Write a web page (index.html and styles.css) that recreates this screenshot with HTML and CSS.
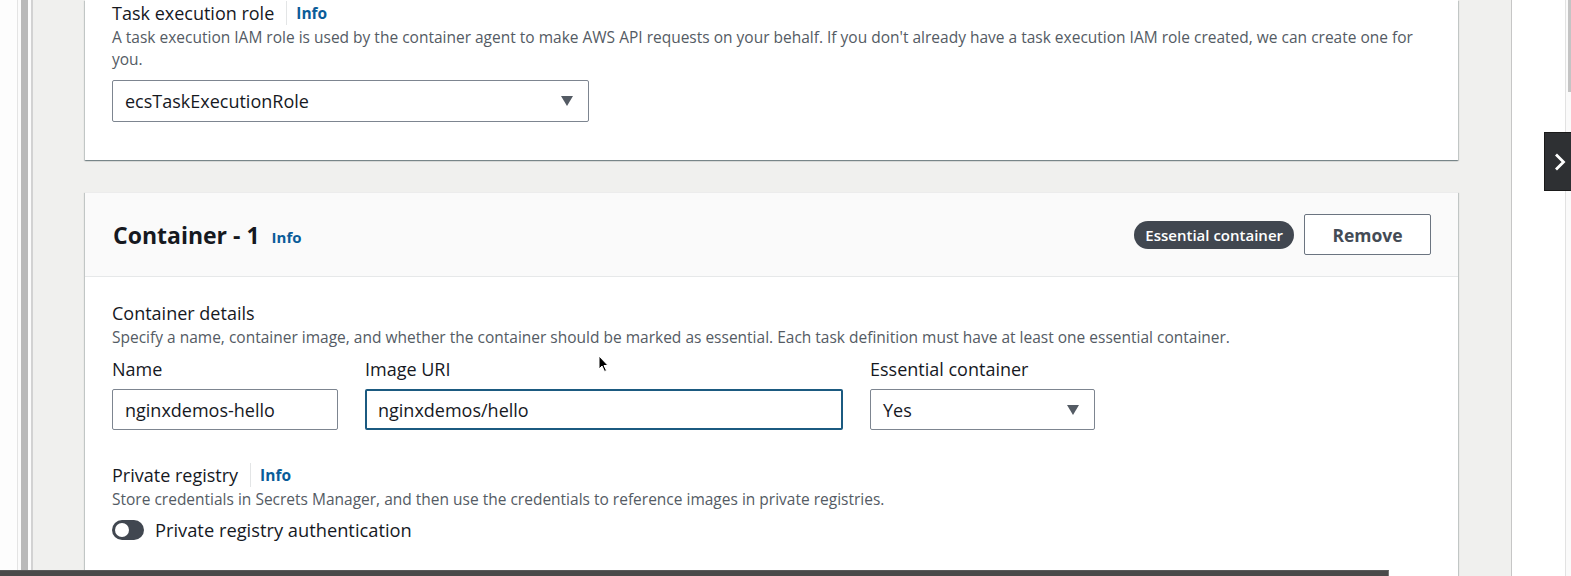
FILE: index.html
```html
<!DOCTYPE html>
<html>
<head>
<meta charset="utf-8">
<link rel="stylesheet" href="styles.css">
</head>
<body>
<div class="app">
  <div class="rail">
    <span class="r-white"></span><span class="r-line"></span><span class="r-gap"></span><span class="r-bar"></span><span class="r-gap"></span><span class="r-edge"></span>
  </div>
  <main class="content">
    <section class="card card-top">
      <div class="field-head"><span class="label">Task execution role</span><span class="divider"></span><a class="info">Info</a></div>
      <p class="desc d2">A task execution IAM role is used by the container agent to make AWS API requests on your behalf. If you don't already have a task execution IAM role created, we can create one for you.</p>
      <div class="select select-role"><span>ecsTaskExecutionRole</span><span class="caret"></span></div>
    </section>
    <section class="card card-container">
      <header class="card-header">
        <h2 class="title">Container - 1</h2><a class="info info-lg">Info</a>
        <div class="actions"><span class="badge">Essential container</span><button class="btn">Remove</button></div>
      </header>
      <div class="card-body">
        <div class="label lh24">Container details</div>
        <p class="desc d1">Specify a name, container image, and whether the container should be marked as essential. Each task definition must have at least one essential container.</p>
        <div class="fields">
          <div class="field f-name"><div class="label lh24">Name</div><div class="input">nginxdemos-hello</div></div>
          <div class="field f-uri"><div class="label lh24">Image URI</div><div class="input focus">nginxdemos/hello</div></div>
          <div class="field f-ess"><div class="label lh24">Essential container</div><div class="select"><span>Yes</span><span class="caret"></span></div></div>
        </div>
        <div class="field-head reg"><span class="label">Private registry</span><span class="divider"></span><a class="info">Info</a></div>
        <p class="desc d1">Store credentials in Secrets Manager, and then use the credentials to reference images in private registries.</p>
        <div class="toggle-row"><span class="toggle"><span class="knob"></span></span><span class="toggle-label">Private registry authentication</span></div>
      </div>
    </section>
  </main>
  <aside class="panel"></aside>
  <div class="scroll"><span class="thumb"></span></div>
</div>
<div class="tab"><svg width="12" height="20" viewBox="0 0 12 20"><path d="M2 2.5 L9.5 10 L2 17.5" fill="none" stroke="#fff" stroke-width="2.8"/></svg></div>
<div class="hbar"></div>
<svg class="cursor" width="12" height="18" viewBox="0 0 12 18"><path d="M1 1 L1 14 L4 11 L6.5 16.5 L8.5 15.5 L6 10.5 L10 10.5 Z" fill="#000" stroke="#fff" stroke-width="1"/></svg>
</body>
</html>
```
FILE: styles.css
```css
* { box-sizing: border-box; }
html, body { margin: 0; padding: 0; }
body {
  width: 1571px;
  height: 576px;
  overflow: hidden;
  font-family: "Open Sans", "Noto Sans", sans-serif;
  color: #16191f;
  background: #fff;
}
.app { display: flex; height: 576px; }
.rail { display: flex; width: 33px; flex: none; }
.rail span { display: block; height: 100%; }
.r-white { width: 17px; background: #fdfdfd; }
.r-line { width: 1px; background: #e4e4e4; }
.r-gap { width: 3px; background: #fbfbfb; }
.r-bar { width: 7px; background: #b9b9b9; }
.r-edge { width: 2px; background: #d2d2d2; }
.content {
  flex: 1;
  background: #f0f0ee;
  padding: 0 53px 0 52px;
  display: flex;
  flex-direction: column;
  gap: 32px;
}
.panel { width: 55px; flex: none; border-left: 1px solid #c6c6c6; border-right: 1px solid #e2e2e2; background: #fff; }
.scroll { width: 5px; flex: none; background: #fafafa; position: relative; }
.thumb { position: absolute; top: 0; right: 0; width: 3px; height: 92px; background: #c4c4c4; }
.card {
  background: #fff;
  box-shadow: 0 1px 1px 0 rgba(0,28,36,.3), 1px 1px 1px 0 rgba(0,28,36,.15), -1px 1px 1px 0 rgba(0,28,36,.15);
}
.card-top { padding: 1px 28px 38px 27px; flex: none; }
.field-head { display: flex; align-items: center; height: 24px; }
.label { font-size: 18px; line-height: 22px; color: #16191f; }
.lh24 { line-height: 24px; }
.divider { width: 1px; height: 24px; background: #e3e5e6; margin: 0 9px 0 12px; }
.info { font-size: 15.5px; font-weight: 700; color: #0a5c99; line-height: 22px; }
.desc { margin: 0; font-size: 15.5px; line-height: 22px; color: #545b64; }
.d2 { margin-top: 1px; }
.select, .input {
  height: 42px;
  border: 1px solid #7d8590;
  border-radius: 2px;
  display: flex;
  align-items: center;
  font-size: 18px;
  color: #16191f;
  padding: 0 12px;
  background: #fff;
}
.select { justify-content: space-between; padding-right: 15px; }
.select-role { width: 477px; margin-top: 10px; }
.caret { width: 0; height: 0; border-left: 6px solid transparent; border-right: 6px solid transparent; border-top: 10px solid #545b64; }
.card-container { flex: 1; }
.card-header {
  height: 85px;
  background: #fafafa;
  border-bottom: 1px solid #e6e8e9;
  display: flex;
  align-items: center;
  padding: 0 27px 0 28px;
  border-top: 1px solid #ececec;
}
.title { margin: 0; font-size: 23px; font-weight: 700; color: #16191f; line-height: 28px; }
.info-lg { margin-left: 12px; font-size: 15px; padding-top: 4px; }
.actions { margin-left: auto; display: flex; align-items: center; gap: 10px; }
.badge {
  height: 28px;
  padding: 0 11px;
  border-radius: 14px;
  background: #414750;
  color: #fff;
  font-size: 15px;
  line-height: 28px;
  font-weight: 600;
}
.btn {
  width: 127px;
  height: 41px;
  border: 1px solid #6b7480;
  border-radius: 2px;
  background: #fff;
  font-family: inherit;
  font-size: 17.5px;
  font-weight: 700;
  color: #444b55;
}
.card-body { padding: 24px 28px 0 27px; }
.d1 { margin-top: 1px; }
.fields { display: flex; margin-top: 9px; }
.field .input, .field .select { margin-top: 8px; height: 41px; }
.f-name { width: 226px; margin-right: 27px; }
.f-uri { width: 478px; margin-right: 27px; }
.f-ess { width: 225px; }
.focus { border: 2px solid #1b5a80; padding-left: 11px; }
.reg { margin-top: 33px; }
.toggle-row { display: flex; align-items: center; margin-top: 9px; height: 22px; }
.toggle { width: 32px; height: 20px; border-radius: 10px; background: #414750; position: relative; }
.knob { position: absolute; left: 3px; top: 3px; width: 14px; height: 14px; border-radius: 50%; background: #fff; }
.toggle-label { margin-left: 11px; font-size: 18.3px; line-height: 22px; }
.tab {
  position: fixed; left: 1544px; top: 132px; width: 27px; height: 59px;
  background: #2e3033; border: 1px solid #1a1a1a; border-right: none;
  display: flex; align-items: center; justify-content: center; padding-left: 4px;
}
.hbar { position: fixed; left: 0; bottom: 0; width: 1389px; height: 6px; background: #4a4a4a; border-top: 1px solid #5a5a5a; border-right: 1px solid #777; }
.cursor { position: fixed; left: 598px; top: 355px; }
```
